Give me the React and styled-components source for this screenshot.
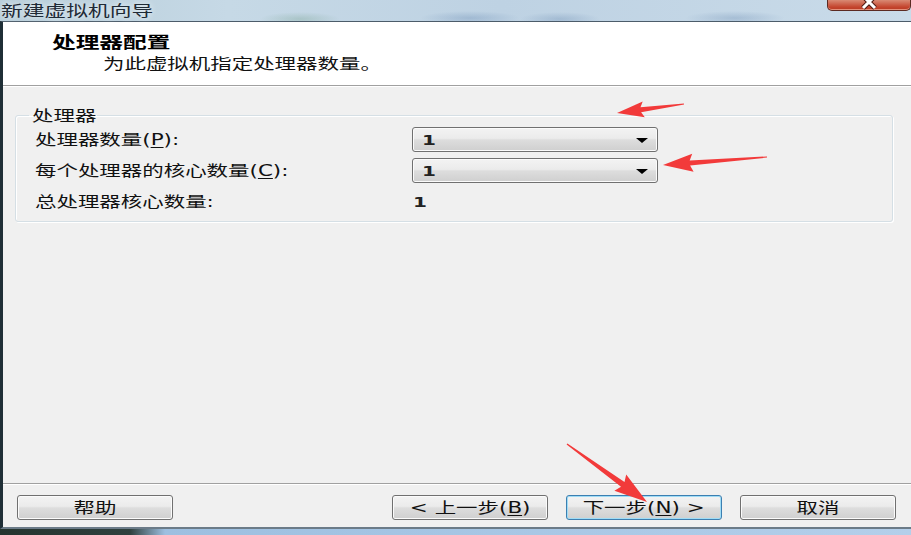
import React from 'react';
import styled, { createGlobalStyle, css } from 'styled-components';

const Global = createGlobalStyle`
  html, body { margin: 0; padding: 0; background: #f0f0f0; overflow: hidden; }
  body { font-family: "DejaVu Sans", "Noto Sans CJK SC", sans-serif; color: #1a1a1a; }
  #root { width: 911px; height: 535px; }
`;

const stretch = css`
  display: inline-block;
  white-space: nowrap;
  transform: scaleX(${p => p.$sx || 1.43});
  transform-origin: ${p => p.$origin || 'left'} center;
`;

const Screen = styled.div`
  position: relative;
  width: 911px;
  height: 535px;
  display: flex;
  flex-direction: column;
  overflow: hidden;
`;

const TitleBar = styled.div`
  flex: none;
  height: 21px;
  display: flex;
  justify-content: space-between;
  align-items: flex-start;
  background:
    radial-gradient(ellipse 40px 7px at 300px 19px, rgba(90,140,110,.25), transparent),
    radial-gradient(ellipse 50px 7px at 470px 18px, rgba(70,110,160,.25), transparent),
    radial-gradient(ellipse 40px 7px at 560px 19px, rgba(60,100,150,.22), transparent),
    radial-gradient(ellipse 50px 7px at 735px 18px, rgba(60,100,150,.22), transparent),
    linear-gradient(to right, #b7cdd9 0%, #c6d9e6 25%, #bed2e3 55%, #c9dbe9 100%);
`;

const WindowTitle = styled.span`
  ${stretch};
  margin: 1px 0 0 1px;
  font-family: "Noto Sans CJK SC", sans-serif;
  font-size: 15px;
  line-height: 17px;
  color: #1e2a36;
  text-shadow: 0 0 5px rgba(255,255,255,.9);
`;

const CloseButton = styled.div`
  width: 84px;
  height: 11px;
  box-sizing: border-box;
  border: 1px solid #5b2a22;
  border-top: none;
  border-radius: 0 0 5px 5px;
  background: linear-gradient(#d98a74, #c4452e 70%, #b83a24);
  box-shadow: inset 0 -1px 0 rgba(255,200,180,.6);
  display: flex;
  justify-content: center;
  overflow: hidden;
`;

const Window = styled.div`
  flex: 1;
  display: flex;
  flex-direction: column;
  border-left: 3px solid #1f2e36;
  border-top: 1px solid #4c5c6a;
  border-bottom: 2px solid #6b7b88;
  background: #f0f0f0;
  min-height: 0;
`;

const Header = styled.div`
  flex: none;
  height: 64px;
  box-sizing: border-box;
  background: #fff;
  border-bottom: 1px solid #a0a0a0;
  padding: 9px 0 0 49px;
  display: flex;
  flex-direction: column;
  font-family: "Noto Sans CJK SC", sans-serif;
`;

const HeaderTitle = styled.div`
  font-size: 16px;
  font-weight: 700;
  line-height: 20px;
  color: #000;
  & > span { ${stretch}; transform: scaleX(1.48); }
`;

const HeaderSub = styled.div`
  margin: 2px 0 0 51px;
  font-size: 15px;
  line-height: 20px;
  color: #111;
  & > span { ${stretch}; }
`;

const Content = styled.div`
  flex: 1;
  border-top: 1px solid #fff;
  border-bottom: 1px solid #a0a0a0;
  padding: 19px 18px 0 12px;
`;

const GroupBox = styled.fieldset`
  margin: 0;
  padding: 3px 0 7px 0;
  border: 1px solid #d5dfe5;
  border-radius: 3px;
  box-shadow: inset 1px 1px 0 #fff, 1px 1px 0 #fff;
  min-inline-size: 0;
`;

const Legend = styled.legend`
  margin-left: 13px;
  padding: 0 0 0 3px;
  width: 68px;
  box-sizing: border-box;
  font-family: "Noto Sans CJK SC", sans-serif;
  font-size: 15px;
  line-height: 18px;
  color: #111;
  & > span { ${stretch}; }
`;

const FieldGrid = styled.div`
  display: grid;
  grid-template-columns: 377px 246px;
  grid-auto-rows: 25px;
  row-gap: 6px;
  padding-left: 19px;
  align-items: center;
`;

const FieldLabel = styled.span`
  ${stretch};
  font-size: 15px;
  line-height: 18px;
  color: #111;
  u { text-decoration-thickness: 1px; text-underline-offset: 2px; }
`;

const ValueText = styled.span`
  ${stretch};
  font-size: 14px;
  font-weight: 700;
  line-height: 18px;
  color: #222;
  margin-left: 1px;
`;

const Combo = styled.div`
  width: 246px;
  height: 25px;
  box-sizing: border-box;
  border: 1px solid #707070;
  border-radius: 3px;
  background: linear-gradient(#f3f3f3 0%, #ebebeb 45%, #dddddd 52%, #cfcfcf 100%);
  box-shadow: inset 0 0 0 1px #fbfbfb;
  display: flex;
  align-items: center;
  justify-content: space-between;
  padding: 0 9px 0 8px;
`;

const ComboArrow = styled.span`
  width: 0;
  height: 0;
  border-left: 6px solid transparent;
  border-right: 6px solid transparent;
  border-top: 5px solid #000;
  margin-top: 2px;
`;

const ButtonBar = styled.div`
  flex: none;
  height: 43px;
  box-sizing: border-box;
  border-top: 1px solid #fff;
  padding: 10px 15px 0 14px;
  display: flex;
  justify-content: space-between;
  align-items: flex-start;
`;

const ButtonGroup = styled.div`
  display: flex;
  gap: 18px;
`;

const Button = styled.div`
  width: 156px;
  height: 25px;
  box-sizing: border-box;
  border: 1px solid ${p => (p.$focused ? '#3c7fb1' : '#707070')};
  border-radius: 3px;
  background: linear-gradient(#f3f3f3 0%, #ebebeb 45%, #dddddd 52%, #cfcfcf 100%);
  box-shadow: inset 0 0 0 1px ${p => (p.$focused ? '#9fdcf6' : '#fbfbfb')};
  display: flex;
  align-items: center;
  justify-content: center;
`;

const ButtonLabel = styled.span`
  ${stretch};
  font-size: 15px;
  line-height: 18px;
  color: #111;
  u { text-decoration-thickness: 1px; text-underline-offset: 2px; }
`;

const Taskbar = styled.div`
  flex: none;
  height: 6px;
  background: linear-gradient(to right, #25342f 0, #2f403e 130px, #9dbfe0 165px, #b4cfea 100%);
`;

const Annotations = styled.svg`
  position: absolute;
  left: 0;
  top: 0;
  width: 911px;
  height: 535px;
  pointer-events: none;
`;

function arrowPoints(tx, ty, px, py, L, hw, sw) {
  const dx = px - tx;
  const dy = py - ty;
  const len = Math.hypot(dx, dy);
  const ux = dx / len;
  const uy = dy / len;
  const nx = -uy;
  const ny = ux;
  const bx = px - ux * L;
  const by = py - uy * L;
  const pts = [
    [tx + nx * 0.6, ty + ny * 0.6],
    [bx + nx * sw / 2, by + ny * sw / 2],
    [bx - ux * 3 + nx * hw, by - uy * 3 + ny * hw],
    [px, py],
    [bx - ux * 3 - nx * hw, by - uy * 3 - ny * hw],
    [bx - nx * sw / 2, by - ny * sw / 2],
    [tx - nx * 0.6, ty - ny * 0.6],
  ];
  return pts.map(p => p[0].toFixed(1) + ',' + p[1].toFixed(1)).join(' ');
}

const arrows = [
  { t: [684, 104], p: [617, 113], L: 24, hw: 8, sw: 5 },
  { t: [767, 157], p: [663, 165], L: 27, hw: 9, sw: 5 },
  { t: [567, 444], p: [647, 502], L: 30, hw: 10, sw: 6 },
];

export default function App() {
  return (
    <>
      <Global />
      <Screen>
        <TitleBar>
          <WindowTitle $sx={1.45}>新建虚拟机向导</WindowTitle>
          <CloseButton>
            <svg width="22" height="10" viewBox="0 0 22 10">
              <path d="M5 -4 L17 8 M17 -4 L5 8" stroke="#4a1a12" strokeWidth="5" />
              <path d="M5 -4 L17 8 M17 -4 L5 8" stroke="#fff" strokeWidth="3" />
            </svg>
          </CloseButton>
        </TitleBar>
        <Window>
          <Header>
            <HeaderTitle><span>处理器配置</span></HeaderTitle>
            <HeaderSub><span>为此虚拟机指定处理器数量。</span></HeaderSub>
          </Header>
          <Content>
            <GroupBox>
              <Legend><span>处理器</span></Legend>
              <FieldGrid>
                <div><FieldLabel>处理器数量(<u>P</u>):</FieldLabel></div>
                <Combo><ValueText>1</ValueText><ComboArrow /></Combo>
                <div><FieldLabel>每个处理器的核心数量(<u>C</u>):</FieldLabel></div>
                <Combo><ValueText>1</ValueText><ComboArrow /></Combo>
                <div><FieldLabel>总处理器核心数量:</FieldLabel></div>
                <div><ValueText>1</ValueText></div>
              </FieldGrid>
            </GroupBox>
          </Content>
          <ButtonBar>
            <Button><ButtonLabel $origin="center">帮助</ButtonLabel></Button>
            <ButtonGroup>
              <Button><ButtonLabel $origin="center">&lt; 上一步(<u>B</u>)</ButtonLabel></Button>
              <Button $focused><ButtonLabel $origin="center">下一步(<u>N</u>) &gt;</ButtonLabel></Button>
              <Button><ButtonLabel $origin="center">取消</ButtonLabel></Button>
            </ButtonGroup>
          </ButtonBar>
        </Window>
        <Taskbar />
        <Annotations viewBox="0 0 911 535">
          {arrows.map((a, i) => (
            <polygon
              key={i}
              points={arrowPoints(a.t[0], a.t[1], a.p[0], a.p[1], a.L, a.hw, a.sw)}
              fill="#f23a3a"
            />
          ))}
        </Annotations>
      </Screen>
    </>
  );
}
